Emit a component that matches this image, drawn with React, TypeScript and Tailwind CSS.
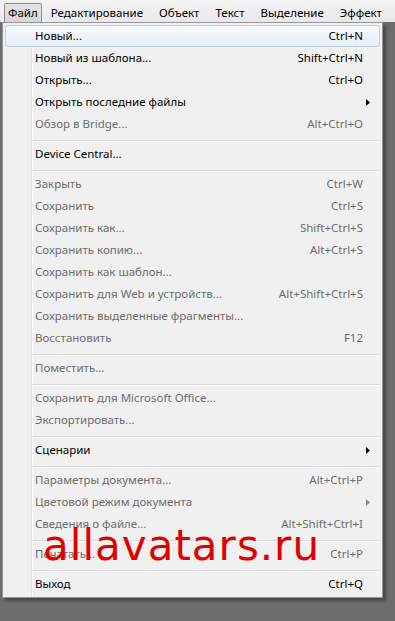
type Entry =
  | { kind: 'item'; label: string; shortcut?: string; disabled?: boolean; sub?: boolean; active?: boolean }
  | { kind: 'sep' }

const MENU_BAR = ['Файл', 'Редактирование', 'Объект', 'Текст', 'Выделение', 'Эффект']

const ENTRIES: Entry[] = [
  { kind: 'item', label: 'Новый...', shortcut: 'Ctrl+N', active: true },
  { kind: 'item', label: 'Новый из шаблона...', shortcut: 'Shift+Ctrl+N' },
  { kind: 'item', label: 'Открыть...', shortcut: 'Ctrl+O' },
  { kind: 'item', label: 'Открыть последние файлы', sub: true },
  { kind: 'item', label: 'Обзор в Bridge...', shortcut: 'Alt+Ctrl+O', disabled: true },
  { kind: 'sep' },
  { kind: 'item', label: 'Device Central...' },
  { kind: 'sep' },
  { kind: 'item', label: 'Закрыть', shortcut: 'Ctrl+W', disabled: true },
  { kind: 'item', label: 'Сохранить', shortcut: 'Ctrl+S', disabled: true },
  { kind: 'item', label: 'Сохранить как...', shortcut: 'Shift+Ctrl+S', disabled: true },
  { kind: 'item', label: 'Сохранить копию...', shortcut: 'Alt+Ctrl+S', disabled: true },
  { kind: 'item', label: 'Сохранить как шаблон...', disabled: true },
  { kind: 'item', label: 'Сохранить для Web и устройств...', shortcut: 'Alt+Shift+Ctrl+S', disabled: true },
  { kind: 'item', label: 'Сохранить выделенные фрагменты...', disabled: true },
  { kind: 'item', label: 'Восстановить', shortcut: 'F12', disabled: true },
  { kind: 'sep' },
  { kind: 'item', label: 'Поместить...', disabled: true },
  { kind: 'sep' },
  { kind: 'item', label: 'Сохранить для Microsoft Office...', disabled: true },
  { kind: 'item', label: 'Экспортировать...', disabled: true },
  { kind: 'sep' },
  { kind: 'item', label: 'Сценарии', sub: true },
  { kind: 'sep' },
  { kind: 'item', label: 'Параметры документа...', shortcut: 'Alt+Ctrl+P', disabled: true },
  { kind: 'item', label: 'Цветовой режим документа', sub: true, disabled: true },
  { kind: 'item', label: 'Сведения о файле...', shortcut: 'Alt+Shift+Ctrl+I', disabled: true },
  { kind: 'sep' },
  { kind: 'item', label: 'Печатать...', shortcut: 'Ctrl+P', disabled: true },
  { kind: 'sep' },
  { kind: 'item', label: 'Выход', shortcut: 'Ctrl+Q' },
]

function Arrow({ disabled }: { disabled?: boolean }) {
  return (
    <svg width="4" height="7" viewBox="0 0 4 7" className={disabled ? 'fill-[#8a8a8a]' : 'fill-black'}>
      <path d="M0 0 L4 3.5 L0 7 Z" />
    </svg>
  )
}

export default function App() {
  return (
    <div className="relative h-[621px] w-[395px] overflow-hidden bg-[#6d6d6d] font-['Noto_Sans',sans-serif] text-[11.5px] leading-none">
      {/* Menu bar */}
      <div className="flex h-[22px] items-stretch gap-[2px] bg-[linear-gradient(#f4f4f4,#e9e9eb)] pl-[4px]">
        {MENU_BAR.map((m, i) => (
          <div
            key={m}
            className={
              i === 0
                ? 'mt-[3px] flex items-center rounded-t-[2px] border border-b-0 border-[#8e8f8f] bg-[linear-gradient(#e4e4e4,#d6d6d6)] px-[3px] text-black'
                : 'mt-[3px] flex items-center px-[7px] text-black'
            }
          >
            {m}
          </div>
        ))}
      </div>

      {/* Dropdown */}
      <div className="ml-[2px] w-[381px] border border-[#979797] bg-[#f0f0f0] bg-[linear-gradient(to_right,transparent_28px,#e2e3e3_28px,#e2e3e3_29px,#ffffff_29px,#ffffff_30px,transparent_30px)] p-[2px] shadow-[3px_3px_3px_rgba(0,0,0,0.35)]">
        {ENTRIES.map((e, i) =>
          e.kind === 'sep' ? (
            <div key={i} className="h-[8px] pl-[28px] pr-[1px] pt-[5px]">
              <div className="border-t border-b border-t-[#dadada] border-b-white" />
            </div>
          ) : (
            <div
              key={i}
              className={
                'flex h-[22px] items-center rounded-[3px] border pl-[29px] pr-[16px] ' +
                (e.active
                  ? 'border-[#b8d2f0] bg-[linear-gradient(#f6f9fd,#e8eff8)] '
                  : 'border-transparent ') +
                (e.disabled ? 'text-[#6d6d6d]' : 'text-black')
              }
            >
              <span className="flex-1 whitespace-nowrap">{e.label}</span>
              {e.shortcut && <span className="whitespace-nowrap">{e.shortcut}</span>}
              {e.sub && (
                <span className="mr-[-7px] flex items-center">
                  <Arrow disabled={e.disabled} />
                </span>
              )}
            </div>
          ),
        )}
      </div>

      {/* Watermark */}
      <div className="absolute left-[43px] top-[525px] font-['DejaVu_Sans',sans-serif] text-[42px] leading-none tracking-[1px] text-[#e10000]">
        allavatars.ru
      </div>
    </div>
  )
}
